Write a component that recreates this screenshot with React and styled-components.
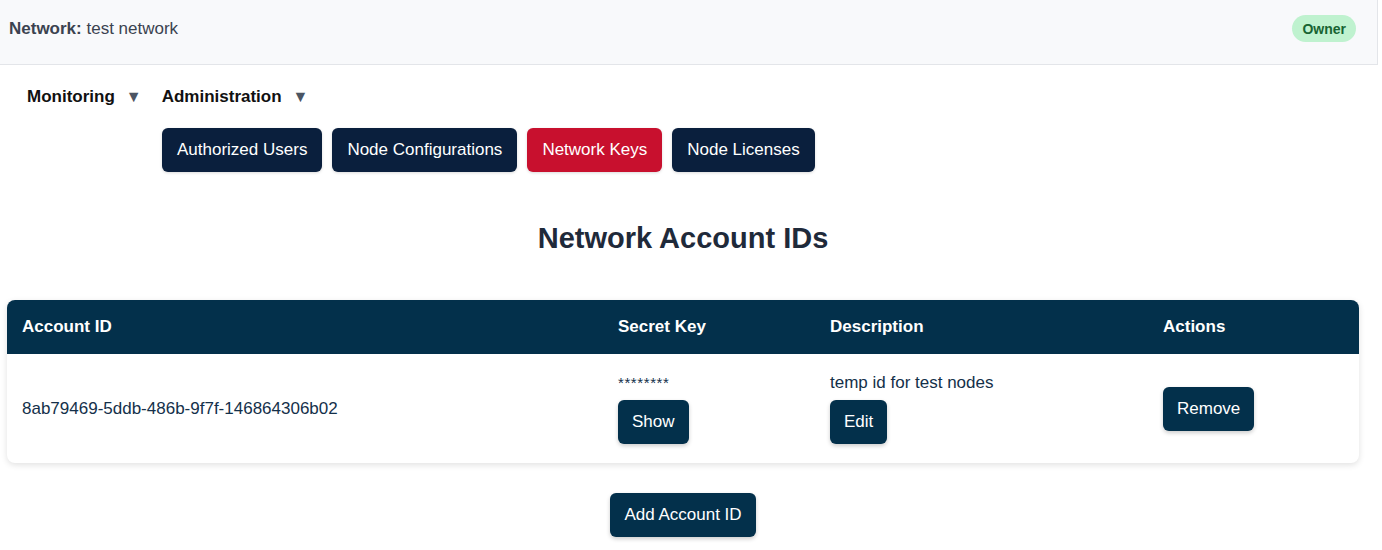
import React from "react";
import styled, { createGlobalStyle } from "styled-components";

const GlobalStyle = createGlobalStyle`
  html, body {
    margin: 0;
    padding: 0;
    background: #fff;
    font-family: "Liberation Sans", Arial, sans-serif;
  }
  * { box-sizing: border-box; }
`;

const Page = styled.div`
  width: 1382px;
  height: 550px;
  overflow: hidden;
  background: #fff;
`;

const TopBar = styled.header`
  width: 1378px;
  height: 65px;
  display: flex;
  align-items: center;
  justify-content: space-between;
  padding: 0 21px 7px 9px;
  background: #f8f9fb;
  border-bottom: 1px solid #e3e5e9;
  border-right: 1px solid #e3e5e9;
  color: #3b4350;
  font-size: 17px;
  b {
    font-weight: 700;
  }
`;

const Badge = styled.span`
  display: inline-flex;
  align-items: center;
  height: 27px;
  padding: 0 10px;
  border-radius: 14px;
  background: #bff2cf;
  color: #176432;
  font-size: 14px;
  font-weight: 700;
`;

const Main = styled.main`
  width: 1366px;
`;

const Nav = styled.nav`
  display: flex;
  gap: 20px;
  padding: 12px 0 0 27px;
  height: 52px;
  align-items: center;
`;

const NavItem = styled.div`
  display: flex;
  align-items: center;
  gap: 11px;
  font-size: 17px;
  font-weight: 700;
  color: #111;
  span {
    color: #4b5563;
    font-size: 16px;
  }
`;

const SubTabs = styled.div`
  display: flex;
  gap: 10px;
  padding: 11px 0 0 162px;
`;

const Tab = styled.button`
  height: 44px;
  padding: 0 15px;
  border: none;
  border-radius: 6px;
  background: ${(p) => (p.$active ? "#c8102e" : "#0a1f3d")};
  color: #fff;
  font-family: inherit;
  font-size: 17px;
  box-shadow: 0 1px 3px rgba(0, 0, 0, 0.15);
`;

const Title = styled.h2`
  margin: 50px 0 0;
  height: 37px;
  text-align: center;
  font-size: 29px;
  font-weight: 700;
  color: #1f2a3a;
`;

const Card = styled.div`
  margin: 41px 0 0 7px;
  width: 1352px;
  border-radius: 8px;
  overflow: hidden;
  box-shadow: 0 2px 6px rgba(0, 0, 0, 0.12);
`;

const Table = styled.table`
  width: 100%;
  border-collapse: collapse;
  table-layout: fixed;
`;

const Th = styled.th`
  height: 54px;
  padding: 0 15px;
  background: #03304b;
  color: #fff;
  text-align: left;
  font-size: 17px;
  font-weight: 700;
  width: ${(p) => p.$w}px;
`;

const Td = styled.td`
  height: 109px;
  padding: 0 15px;
  vertical-align: middle;
  color: #14304a;
  font-size: 17px;
`;

const Stack = styled.div`
  display: flex;
  flex-direction: column;
  align-items: flex-start;
  gap: ${(p) => p.$gap}px;
`;

const Mask = styled.div`
  font-size: 15px;
  letter-spacing: 0.6px;
`;

const Button = styled.button`
  height: 44px;
  padding: 0 14px;
  border: none;
  border-radius: 6px;
  background: #03304b;
  color: #fff;
  font-family: inherit;
  font-size: 17px;
  box-shadow: 0 2px 4px rgba(0, 0, 0, 0.2);
`;

const Footer = styled.div`
  display: flex;
  justify-content: center;
  padding-top: 30px;
`;

export default function App() {
  return (
    <Page>
      <GlobalStyle />
      <TopBar>
        <div>
          <b>Network:</b> test network
        </div>
        <Badge>Owner</Badge>
      </TopBar>
      <Main>
        <Nav>
          <NavItem>
            Monitoring <span>▼</span>
          </NavItem>
          <NavItem>
            Administration <span>▼</span>
          </NavItem>
        </Nav>
        <SubTabs>
          <Tab>Authorized Users</Tab>
          <Tab>Node Configurations</Tab>
          <Tab $active>Network Keys</Tab>
          <Tab>Node Licenses</Tab>
        </SubTabs>
        <Title>Network Account IDs</Title>
        <Card>
          <Table>
            <thead>
              <tr>
                <Th $w={596}>Account ID</Th>
                <Th $w={212}>Secret Key</Th>
                <Th $w={333}>Description</Th>
                <Th $w={211}>Actions</Th>
              </tr>
            </thead>
            <tbody>
              <tr>
                <Td>8ab79469-5ddb-486b-9f7f-146864306b02</Td>
                <Td>
                  <Stack $gap={9}>
                    <Mask>********</Mask>
                    <Button>Show</Button>
                  </Stack>
                </Td>
                <Td>
                  <Stack $gap={7}>
                    <div>temp id for test nodes</div>
                    <Button>Edit</Button>
                  </Stack>
                </Td>
                <Td>
                  <Button>Remove</Button>
                </Td>
              </tr>
            </tbody>
          </Table>
        </Card>
        <Footer>
          <Button>Add Account ID</Button>
        </Footer>
      </Main>
    </Page>
  );
}
